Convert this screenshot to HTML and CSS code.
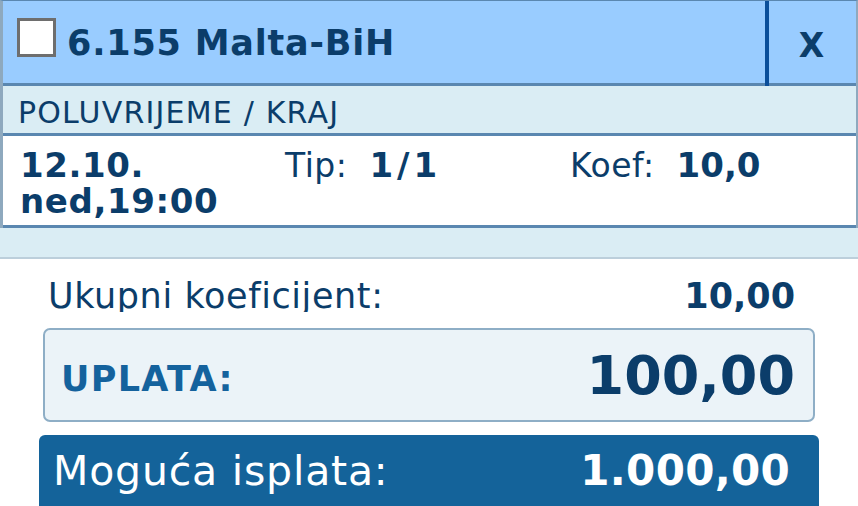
FILE: index.html
```html
<!DOCTYPE html>
<html lang="bs">
<head>
<meta charset="utf-8">
<title>Listić</title>
<link rel="stylesheet" href="styles.css">
</head>
<body>
<div class="ticket">
  <div class="head">
    <div class="title-wrap">
      <span class="checkbox"></span>
      <span class="title">6.155 Malta-BiH</span>
    </div>
    <div class="close">X</div>
  </div>
  <div class="sub">POLUVRIJEME / KRAJ</div>
  <div class="detail">
    <div class="date">12.10.<br>ned,19:00</div>
    <div class="tip"><span class="lbl">Tip:</span><b class="val">1<span class="slash">/</span>1</b></div>
    <div class="koef"><span class="lbl">Koef:</span><b class="val">10,0</b></div>
  </div>
</div>
<div class="band"></div>
<div class="total">
  <span class="total-lbl">Ukupni koeficijent:</span>
  <b>10,00</b>
</div>
<div class="stake">
  <span class="stake-lbl">UPLATA:</span>
  <span class="stake-val">100,00</span>
</div>
<div class="payout">
  <span class="payout-lbl">Moguća isplata:</span>
  <b>1.000,00</b>
</div>
</body>
</html>
```

FILE: styles.css
```css
* { box-sizing: border-box; }
html, body { margin: 0; padding: 0; background: #fff; }
body {
  width: 858px;
  height: 506px;
  overflow: hidden;
  font-family: "DejaVu Sans", Verdana, sans-serif;
  color: #0b3d6a;
}
.ticket {
  border-top: 1px solid #5a87b0;
  border-left: 3px solid #8ea9be;
  border-right: 2px solid #8ea9be;
}
.head {
  display: flex;
  height: 85px;
  background: #99ccff;
  box-shadow: inset 0 -3px 0 #5a87b0;
}
.title-wrap {
  flex: 1;
  display: flex;
  align-items: flex-start;
  padding-left: 14px;
}
.checkbox {
  width: 39px;
  height: 39px;
  margin-top: 17px;
  background: #fff;
  border: 3px solid #6e6e6e;
  flex: none;
}
.title {
  margin-left: 11px;
  margin-top: 22px;
  font-size: 35px;
  line-height: 40px;
  font-weight: bold;
  letter-spacing: 0.8px;
}
.close {
  width: 91px;
  border-left: 4px solid #0b4f9a;
  display: flex;
  align-items: center;
  justify-content: center;
  padding: 4px 2px 0 0;
  font-size: 33px;
  font-weight: bold;
}
.sub {
  height: 50px;
  padding: 6px 0 0 15px;
  font-size: 30px;
  line-height: 41px;
  letter-spacing: 1.2px;
  background: #daedf4;
  border-bottom: 3px solid #5a87b0;
}
.detail {
  display: grid;
  grid-template-columns: 265px 285px 1fr;
  height: 92px;
  padding: 11px 0 0 17px;
  font-size: 33px;
  line-height: 36px;
  border-bottom: 3px solid #5a87b0;
}
.date {
  font-weight: bold;
  font-size: 34px;
  letter-spacing: 0.6px;
}
.lbl { letter-spacing: 0.5px; }
.val { font-weight: bold; font-size: 34px; margin-left: 22px; }
.slash { margin: 0 4px; }
.band {
  height: 31px;
  background: #daedf4;
  border-bottom: 2px solid #bccfdb;
}
.total {
  display: flex;
  justify-content: space-between;
  height: 53px;
  overflow: hidden;
  padding: 17px 63px 0 48px;
  font-size: 35px;
  line-height: 40px;
}
.total-lbl { letter-spacing: 0.6px; }
.stake {
  display: flex;
  justify-content: space-between;
  align-items: center;
  height: 94px;
  margin: 16px 43px 0;
  padding: 0 18px 0 16px;
  background: #ebf3f8;
  border: 2px solid #8eaec6;
  border-radius: 7px;
}
.stake-lbl {
  color: #14629d;
  font-weight: bold;
  font-size: 35px;
  letter-spacing: 1.3px;
  padding-top: 8px;
}
.stake-val {
  font-weight: bold;
  font-size: 54px;
}
.payout {
  display: flex;
  justify-content: space-between;
  height: 80px;
  margin: 13px 39px 0;
  padding: 11px 29px 0 14px;
  background: #14639a;
  color: #fff;
  border-radius: 6px;
  font-size: 41px;
  line-height: 50px;
}
.payout-lbl { letter-spacing: 0.8px; }
.payout b { font-size: 42px; letter-spacing: 0.3px; }
```
